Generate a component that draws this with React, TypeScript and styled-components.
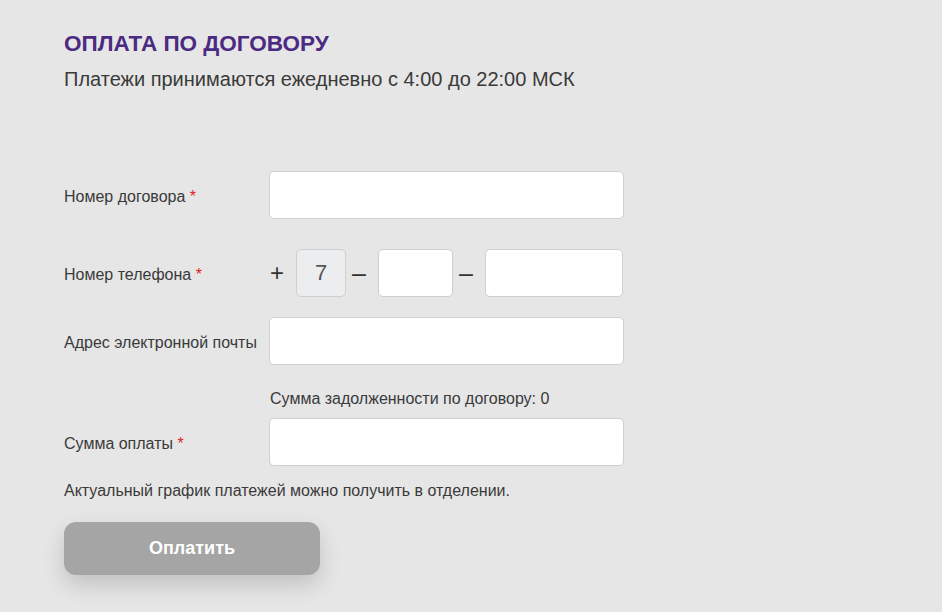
import React from "react";
import styled, { createGlobalStyle } from "styled-components";

const Global = createGlobalStyle`
  html, body { margin: 0; padding: 0; background: #e6e6e6; }
  body { font-family: "Liberation Sans", Arial, sans-serif; color: #333; }
`;

const Page = styled.div`
  min-height: 612px;
  box-sizing: border-box;
  padding: 31px 64px 0 64px;
  background: #e6e6e6;
`;

const Title = styled.h1`
  margin: 0;
  font-size: 22.5px;
  line-height: 26px;
  font-weight: 700;
  color: #4b2a82;
`;

const Subtitle = styled.p`
  margin: 10px 0 0 0;
  font-size: 20px;
  line-height: 24px;
  color: #3a3a3a;
`;

const Form = styled.form`
  margin-top: 80px;
  display: flex;
  flex-direction: column;
`;

const Row = styled.div<{ $mt?: number }>`
  display: flex;
  align-items: center;
  margin-top: ${(p) => p.$mt ?? 0}px;
`;

const Label = styled.label`
  width: 205px;
  flex: none;
  padding-top: 3px;
  font-size: 16px;
  color: #3a3a3a;
  white-space: nowrap;
`;

const Star = styled.span`
  color: #e0231c;
`;

const Input = styled.input<{ $w: number; $disabled?: boolean }>`
  box-sizing: border-box;
  width: ${(p) => p.$w}px;
  height: 48px;
  border: 1px solid #cfcfcf;
  border-radius: 5px;
  background: ${(p) => (p.$disabled ? "#ecedef" : "#fff")};
  font-family: "Liberation Sans", Arial, sans-serif;
  font-size: 22px;
  color: #555;
  text-align: center;
  padding: 0;
  outline: none;
`;

const Plus = styled.span`
  width: 27px;
  flex: none;
  padding-left: 1px;
  box-sizing: border-box;
  font-size: 24px;
  color: #333;
`;

const Dash = styled.span`
  width: 32px;
  flex: none;
  padding-left: 6px;
  box-sizing: border-box;
  font-size: 25px;
  line-height: 1;
  color: #333;
`;

const Hint = styled.div<{ $indent?: boolean; $mt: number }>`
  margin-top: ${(p) => p.$mt}px;
  margin-left: ${(p) => (p.$indent ? 206 : 0)}px;
  font-size: 16px;
  line-height: 18px;
  color: #3a3a3a;
`;

const PayButton = styled.button`
  margin-top: 22px;
  width: 256px;
  height: 53px;
  border: none;
  border-radius: 12px;
  background: #a5a5a5;
  color: #fff;
  font-family: "Liberation Sans", Arial, sans-serif;
  font-size: 18px;
  font-weight: 700;
  box-shadow: 0 10px 22px rgba(0, 0, 0, 0.16);
  cursor: default;
`;

export default function App() {
  return (
    <>
      <Global />
      <Page>
        <Title>ОПЛАТА ПО ДОГОВОРУ</Title>
        <Subtitle>Платежи принимаются ежедневно с 4:00 до 22:00 МСК</Subtitle>
        <Form onSubmit={(e) => e.preventDefault()}>
          <Row>
            <Label>
              Номер договора <Star>*</Star>
            </Label>
            <Input $w={355} />
          </Row>
          <Row $mt={30}>
            <Label>
              Номер телефона <Star>*</Star>
            </Label>
            <Plus>+</Plus>
            <Input $w={50} $disabled value="7" readOnly />
            <Dash>–</Dash>
            <Input $w={75} />
            <Dash>–</Dash>
            <Input $w={138} />
          </Row>
          <Row $mt={20}>
            <Label>Адрес электронной почты</Label>
            <Input $w={355} />
          </Row>
          <Hint $indent $mt={25}>
            Сумма задолженности по договору: 0
          </Hint>
          <Row $mt={10}>
            <Label>
              Сумма оплаты <Star>*</Star>
            </Label>
            <Input $w={355} />
          </Row>
          <Hint $mt={16}>Актуальный график платежей можно получить в отделении.</Hint>
          <div>
            <PayButton type="button">Оплатить</PayButton>
          </div>
        </Form>
      </Page>
    </>
  );
}
